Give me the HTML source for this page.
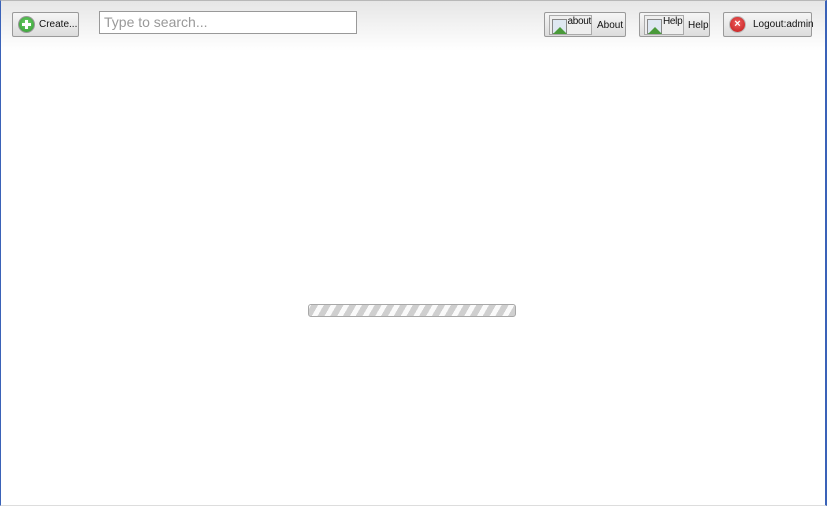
<!DOCTYPE html>
<html><head><meta charset="utf-8"><style>
*{box-sizing:border-box;margin:0;padding:0}
html,body{width:827px;height:506px;overflow:hidden;background:#fff;font-family:"Liberation Sans",Arial,sans-serif}
#win{position:absolute;left:0;top:0;width:827px;height:506px;border-left:1px solid #3a62b8;border-right:2px solid #3a62b8;border-bottom:1px solid #ddd;border-top:1px solid #b8b8b8}
#hdr{position:absolute;left:0;right:0;top:0;height:50px;background:linear-gradient(#e6e6e6,#f4f4f4 55%,#fff)}
.btn{position:absolute;top:11px;height:25px;border:1px solid #9a9a9a;border-radius:2px;background:linear-gradient(#f6f6f6,#dcdcdc);font-size:10px;color:#111;display:flex;align-items:center;white-space:nowrap}
.ico{width:17px;height:17px;border-radius:50%;position:relative;display:inline-block;flex:none}
.broken{position:absolute;top:2px;height:20px;border:1px solid #aaa;background:#eee;display:flex;align-items:flex-start;font-size:10px;letter-spacing:-0.3px}
.broken svg{margin:3px 0 0 2px}
#search{position:absolute;left:98px;top:10px;width:258px;height:23px;border:1px solid #999;background:#fff;font-size:14px;color:#999;padding:2px 0 0 4px}
#bar{position:absolute;left:307px;top:303px;width:208px;height:13px;border:1px solid #a8a8a8;border-radius:3px;background:repeating-linear-gradient(-60deg,#cfcfcf 0 6px,#fafafa 6px 11px)}
</style></head><body>
<div id="win">
<div id="hdr"></div>
<div class="btn" style="left:11px;width:67px">
 <span class="ico" style="margin-left:5px;background:radial-gradient(circle at 50% 40%,#6fd06a,#2e9a2e);border:1px solid #999">
  <span style="position:absolute;left:6px;top:3px;width:3px;height:9px;background:#fff"></span>
  <span style="position:absolute;left:3px;top:6px;width:9px;height:3px;background:#fff"></span>
 </span>
 <span style="margin-left:4px">Create...</span>
</div>
<div id="search">Type to search...</div>
<div class="btn" style="left:543px;width:82px">
 <div class="broken" style="left:4px;width:43px"><svg width="16" height="16"><rect x="0.5" y="0.5" width="14" height="14" fill="#dfe8f2" stroke="#888"/><path d="M1 15 L8 8 L15 15Z" fill="#4a9a3a"/></svg>about</div>
 <span style="position:absolute;left:52px;top:7px">About</span>
</div>
<div class="btn" style="left:638px;width:71px">
 <div class="broken" style="left:4px;width:40px"><svg width="16" height="16"><rect x="0.5" y="0.5" width="14" height="14" fill="#dfe8f2" stroke="#888"/><path d="M1 15 L8 8 L15 15Z" fill="#4a9a3a"/></svg>Help</div>
 <span style="position:absolute;left:48px;top:7px">Help</span>
</div>
<div class="btn" style="left:722px;width:89px">
 <span class="ico" style="margin-left:5px;background:radial-gradient(circle at 50% 40%,#f06060,#c01818);border:1px solid #bbb;color:#fff;font-size:11px;font-weight:bold;text-align:center;line-height:14px">×</span>
 <span style="margin-left:7px">Logout:admin</span>
</div>
<div id="bar"></div>
</div>
</body></html>
